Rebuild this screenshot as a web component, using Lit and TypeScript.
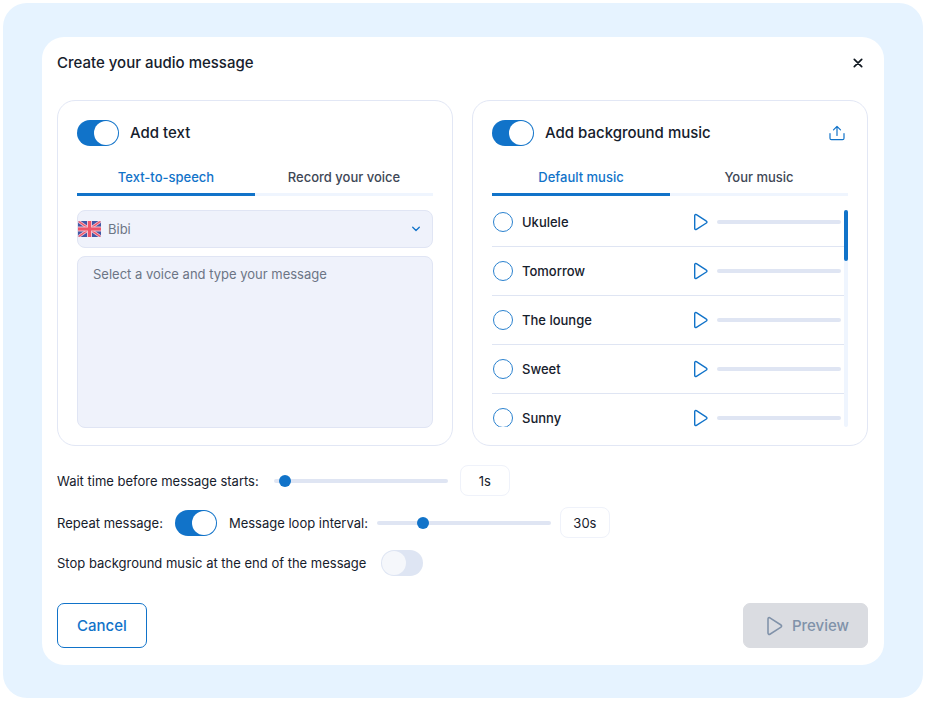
import { LitElement, html, css, svg } from "lit";
import { customElement, property, state } from "lit/decorators.js";

const playShape = svg`<path d="M1.7 2.6v12.8c0 .9.9 1.4 1.7 1l10-6.4c.7-.4.7-1.5 0-1.9L3.4 1.6c-.8-.4-1.7.1-1.7 1z" fill="none" stroke="currentColor" stroke-width="1.4" stroke-linejoin="round"/>`;

@customElement("toggle-switch")
class ToggleSwitch extends LitElement {
  @property({ type: Boolean }) on = false;
  @property() label = "";

  static styles = css`
    :host {
      display: block;
      flex: none;
      height: 26px;
    }
    .switch {
      appearance: none;
      display: flex;
      align-items: center;
      box-sizing: border-box;
      width: 42px;
      height: 26px;
      margin: 0;
      padding: 0 1px;
      border-radius: 13px;
      background: #dee5f3;
      cursor: pointer;
    }
    .switch::before {
      content: "";
      width: 24px;
      height: 24px;
      border-radius: 50%;
      background: #f5f7fb;
    }
    .switch:checked {
      justify-content: flex-end;
      background: #1173c9;
    }
    .switch:checked::before {
      background: #fff;
    }
  `;

  render() {
    return html`<input
      class="switch"
      type="checkbox"
      role="switch"
      aria-label=${this.label}
      .checked=${this.on}
    />`;
  }
}

@customElement("tab-bar")
class TabBar extends LitElement {
  @property({ type: Array }) tabs: string[] = [];
  @state() active = 0;

  static styles = css`
    .tabs {
      display: grid;
      grid-template-columns: 1fr 1fr;
    }
    .tab {
      box-sizing: border-box;
      height: 37px;
      padding: 1px 0 0;
      border: 0;
      border-bottom: 3px solid #eff5fe;
      background: none;
      color: #3e4756;
      font: 500 13px/20px Inter, sans-serif;
      cursor: pointer;
    }
    .active {
      border-color: #1173c9;
      color: #1173c9;
    }
  `;

  render() {
    return html`<div class="tabs" role="tablist">
      ${this.tabs.map(
        (tab, i) => html`<button
          class="tab ${i === this.active ? "active" : ""}"
          role="tab"
          aria-selected=${i === this.active}
          @click=${() => (this.active = i)}
        >
          ${tab}
        </button>`
      )}
    </div>`;
  }
}

@customElement("track-list")
class TrackList extends LitElement {
  @state() scrolled = 0;
  private tracks = ["Ukulele", "Tomorrow", "The lounge", "Sweet", "Sunny"];

  static styles = css`
    .scroller {
      display: flex;
      height: 217px;
    }
    .list {
      flex: 1;
      margin: 0;
      padding: 0;
      list-style: none;
      overflow-y: auto;
      scrollbar-width: none;
    }
    .row {
      display: grid;
      grid-template-columns: 1fr 16px 124px;
      align-items: center;
      column-gap: 8px;
      padding: 14px 3px 14px 1px;
      border-bottom: 1px solid #dfe5f3;
    }
    .row:first-child {
      padding-top: 2px;
    }
    .choice {
      display: flex;
      align-items: center;
      gap: 9px;
      color: #16202c;
      font: 500 13px/20px Inter, sans-serif;
    }
    .radio {
      appearance: none;
      box-sizing: border-box;
      width: 20px;
      height: 20px;
      margin: 0;
      border: 1px solid #2b82cf;
      border-radius: 50%;
    }
    .radio:checked {
      border-width: 6px;
    }
    .play {
      display: flex;
      padding: 0;
      border: 0;
      background: none;
      color: #1173c9;
      cursor: pointer;
    }
    .progress {
      appearance: none;
      width: 100%;
      height: 4px;
      border: 0;
      border-radius: 2px;
      background: #dfe5f3;
      overflow: hidden;
    }
    .progress::-webkit-progress-bar {
      background: #dfe5f3;
    }
    .progress::-webkit-progress-value {
      background: #1173c9;
    }
    .rail {
      width: 4px;
      border-radius: 2px;
      background: #eff5fe;
    }
    .thumb {
      height: 51px;
      border-radius: 2px;
      background: #1173c9;
    }
  `;

  private onScroll(e: Event) {
    const el = e.target as HTMLElement;
    this.scrolled = (el.scrollTop / (el.scrollHeight - el.clientHeight)) * 166;
  }

  render() {
    return html`<div class="scroller">
      <ul class="list" @scroll=${this.onScroll}>
        ${this.tracks.map(
          (name) => html`<li class="row">
            <label class="choice"><input class="radio" type="radio" name="track" />${name}</label>
            <button class="play" aria-label="Play ${name}">
              <svg width="16" height="18" viewBox="0 0 16 18">${playShape}</svg>
            </button>
            <progress class="progress" max="100" value="0" aria-label="${name} progress"></progress>
          </li>`
        )}
      </ul>
      <div class="rail"><div class="thumb" style="transform: translateY(${this.scrolled}px)"></div></div>
    </div>`;
  }
}

@customElement("app-root")
class AppRoot extends LitElement {
  @state() wait = 1;
  @state() loop = 30;

  static styles = css`
    :host {
      display: block;
      padding: 3px 4px 3px 3px;
      color: #16202c;
      font: 400 13px/20px Inter, sans-serif;
    }
    .frame {
      padding: 34px 39px 33px;
      border-radius: 24px;
      background: #e6f3ff;
    }
    .dialog {
      padding: 16px 16px 17px 15px;
      border-radius: 22px;
      background: #fff;
    }
    .header {
      display: flex;
      align-items: center;
      justify-content: space-between;
      height: 20px;
      margin-bottom: 27px;
    }
    .title,
    .panel-title {
      margin: 0;
      font: 500 15px/20px Inter, sans-serif;
    }
    .close,
    .upload {
      display: flex;
      padding: 0;
      border: 0;
      background: none;
      color: #101820;
      cursor: pointer;
    }
    .close {
      padding: 5px;
    }
    .upload {
      margin-left: auto;
      color: #1173c9;
    }
    .panels {
      display: grid;
      grid-template-columns: 1fr 1fr;
      gap: 19px;
    }
    .panel {
      padding: 19px 19px 17px;
      border: 1px solid #e2e7f5;
      border-radius: 18px;
    }
    .panel-head {
      display: flex;
      align-items: center;
      gap: 11px;
      margin-bottom: 13px;
    }
    .body {
      margin-top: 14px;
    }
    .voice {
      display: grid;
      align-items: center;
      margin-bottom: 8px;
    }
    .voice > * {
      grid-area: 1 / 1;
    }
    .select,
    .message {
      box-sizing: border-box;
      width: 100%;
      border: 1px solid #e0e5f4;
      border-radius: 8px;
      background: #eff2fb;
      color: #6c7585;
      font: 400 13px/20px Inter, sans-serif;
    }
    .select {
      appearance: none;
      height: 38px;
      padding: 0 30px;
    }
    .flag,
    .chevron {
      pointer-events: none;
      z-index: 1;
    }
    .flag {
      margin-left: 1px;
    }
    .chevron {
      justify-self: end;
      margin-right: 12px;
    }
    .message {
      display: block;
      height: 172px;
      padding: 7px 15px;
      resize: none;
    }
    .message::placeholder {
      color: #6c7585;
    }
    .settings {
      margin: 19px 0 27px;
    }
    .setting {
      display: flex;
      align-items: center;
      min-height: 31px;
      margin-bottom: 11px;
      gap: 12px;
    }
    .setting:last-child {
      min-height: 27px;
      margin: 0;
    }
    .caption {
      padding-right: 3px;
    }
    .slider-group {
      display: flex;
      align-items: center;
      gap: 9px;
    }
    .range {
      appearance: none;
      width: 174px;
      height: 12px;
      margin: 0;
      background: none;
    }
    .range::-webkit-slider-runnable-track {
      height: 4px;
      border-radius: 2px;
      background: #dfe5f3;
    }
    .range::-webkit-slider-thumb {
      appearance: none;
      width: 12px;
      height: 12px;
      margin-top: -4px;
      border-radius: 50%;
      background: #1173c9;
    }
    .value {
      box-sizing: border-box;
      width: 50px;
      height: 31px;
      padding: 0;
      border: 1px solid #eff2fa;
      border-radius: 8px;
      background: #fff;
      color: #16202c;
      font: 400 13px/20px Inter, sans-serif;
      text-align: center;
    }
    .actions {
      display: flex;
      justify-content: space-between;
    }
    .btn {
      display: flex;
      align-items: center;
      gap: 8px;
      height: 45px;
      padding: 0 19px;
      border: 1px solid #1173c9;
      border-radius: 7px;
      background: #fff;
      color: #1173c9;
      font: 500 15px/20px Inter, sans-serif;
    }
    .btn:disabled {
      padding: 0 18px 0 22px;
      border-color: #dadce1;
      background: #dadce1;
      color: #8092a9;
    }
  `;

  render() {
    return html`<main class="frame">
      <section class="dialog" role="dialog" aria-labelledby="title">
        <header class="header">
          <h1 class="title" id="title">Create your audio message</h1>
          <button class="close" aria-label="Close">
            <svg width="10" height="10" viewBox="0 0 10 10"><path d="M1.3 1.3l7.4 7.4M8.7 1.3L1.3 8.7" stroke="currentColor" stroke-width="1.7" stroke-linecap="round"/></svg>
          </button>
        </header>
        <div class="panels">
          <section class="panel">
            <div class="panel-head">
              <toggle-switch on label="Add text"></toggle-switch>
              <h2 class="panel-title">Add text</h2>
            </div>
            <tab-bar .tabs=${["Text-to-speech", "Record your voice"]}></tab-bar>
            <div class="body">
              <div class="voice">
                <select class="select" aria-label="Voice"><option>Bibi</option></select>
                <svg class="flag" width="23" height="16" viewBox="0 0 23 16">
                  <clipPath id="flag-clip"><rect width="23" height="16" rx="2"/></clipPath>
                  <g clip-path="url(#flag-clip)">
                    <rect width="23" height="16" fill="#4157a5"/>
                    <path d="M0 0l23 16M23 0L0 16" stroke="#f0c3d2" stroke-width="3"/>
                    <path d="M0 0l23 16M23 0L0 16" stroke="#ee5468" stroke-width="1.4"/>
                    <path d="M11.5 0v16M0 8h23" stroke="#f0c3d2" stroke-width="5"/>
                    <path d="M11.5 0v16M0 8h23" stroke="#ee5468" stroke-width="3"/>
                  </g>
                </svg>
                <svg class="chevron" width="10" height="8" viewBox="0 0 10 8"><path d="M1.7 2.2L5 5.5l3.3-3.3" fill="none" stroke="#1173c9" stroke-width="1.3" stroke-linecap="round" stroke-linejoin="round"/></svg>
              </div>
              <textarea class="message" aria-label="Message" placeholder="Select a voice and type your message"></textarea>
            </div>
          </section>
          <section class="panel">
            <div class="panel-head">
              <toggle-switch on label="Add background music"></toggle-switch>
              <h2 class="panel-title">Add background music</h2>
              <button class="upload" aria-label="Upload music">
                <svg width="22" height="16" viewBox="0 0 22 16"><path d="M4 8.5v4.7c0 .9.6 1.5 1.5 1.5h11c.9 0 1.5-.6 1.5-1.5V8.5M11 10.5V1.5M7.5 4.8L11 1.3l3.5 3.5" fill="none" stroke="currentColor" stroke-width="1.2" stroke-linecap="round" stroke-linejoin="round"/></svg>
              </button>
            </div>
            <tab-bar .tabs=${["Default music", "Your music"]}></tab-bar>
            <div class="body"><track-list></track-list></div>
          </section>
        </div>
        <div class="settings">
          <div class="setting">
            <label class="caption" for="wait">Wait time before message starts:</label>
            <input class="range" id="wait" type="range" min="0" max="30" .value=${String(this.wait)}
              @input=${(e: Event) => (this.wait = Number((e.target as HTMLInputElement).value))} />
            <input class="value" aria-label="Wait time" readonly .value=${`${this.wait}s`} />
          </div>
          <div class="setting">
            <span>Repeat message:</span>
            <toggle-switch on label="Repeat message"></toggle-switch>
            <div class="slider-group">
              <label for="loop">Message loop interval:</label>
              <input class="range" id="loop" type="range" min="0" max="120" .value=${String(this.loop)}
                @input=${(e: Event) => (this.loop = Number((e.target as HTMLInputElement).value))} />
              <input class="value" aria-label="Loop interval" readonly .value=${`${this.loop}s`} />
            </div>
          </div>
          <div class="setting">
            <span class="caption">Stop background music at the end of the message</span>
            <toggle-switch label="Stop background music at the end of the message"></toggle-switch>
          </div>
        </div>
        <footer class="actions">
          <button class="btn">Cancel</button>
          <button class="btn" disabled>
            <svg width="18" height="20" viewBox="0 0 16 18">${playShape}</svg>
            Preview
          </button>
        </footer>
      </section>
    </main>`;
  }
}
